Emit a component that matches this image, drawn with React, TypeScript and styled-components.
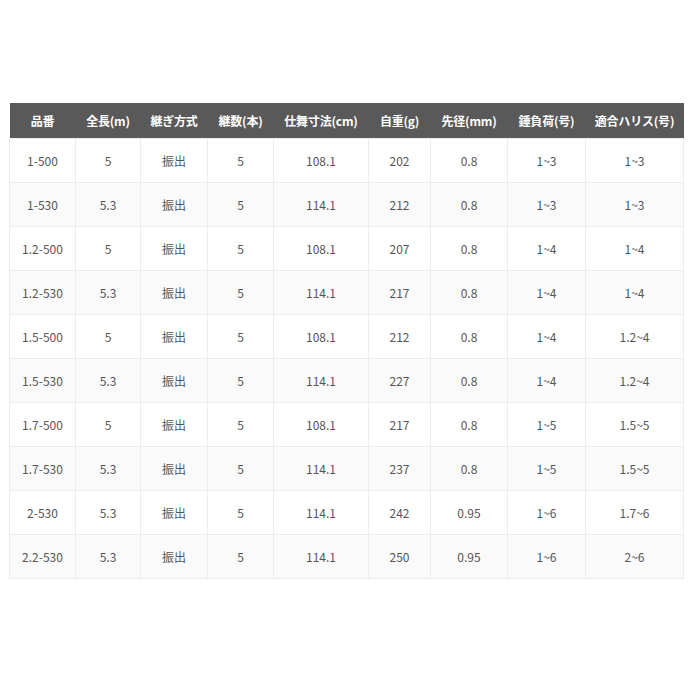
import React from 'react';
import styled, { createGlobalStyle } from 'styled-components';

const GlobalStyle = createGlobalStyle`
  body {
    margin: 0;
    background: #fff;
    font-family: "Noto Sans CJK JP", "Noto Sans", sans-serif;
  }
`;

const Page = styled.div`
  padding: 103px 8px 0 9px;
`;

const SpecTable = styled.table`
  width: 674px;
  table-layout: fixed;
  border-collapse: collapse;
  font-size: 12px;
`;

const HeadCell = styled.th`
  height: 35px;
  padding: 0;
  background: #595959;
  color: #fff;
  font-weight: 700;
  text-align: center;
  letter-spacing: -0.2px;
`;

const Row = styled.tr<{ $alt: boolean }>`
  background: ${(p) => (p.$alt ? '#fafafa' : '#fff')};
`;

const Cell = styled.td`
  height: 43px;
  padding: 0;
  border: 1px solid #ececec;
  color: #555;
  text-align: center;
`;

const columns = [
  { label: '品番', width: 66 },
  { label: '全長(m)', width: 65 },
  { label: '継ぎ方式', width: 67 },
  { label: '継数(本)', width: 66 },
  { label: '仕舞寸法(cm)', width: 95 },
  { label: '自重(g)', width: 62 },
  { label: '先径(mm)', width: 77 },
  { label: '錘負荷(号)', width: 78 },
  { label: '適合ハリス(号)', width: 98 },
];

const rows = [
  ['1-500', '5', '振出', '5', '108.1', '202', '0.8', '1~3', '1~3'],
  ['1-530', '5.3', '振出', '5', '114.1', '212', '0.8', '1~3', '1~3'],
  ['1.2-500', '5', '振出', '5', '108.1', '207', '0.8', '1~4', '1~4'],
  ['1.2-530', '5.3', '振出', '5', '114.1', '217', '0.8', '1~4', '1~4'],
  ['1.5-500', '5', '振出', '5', '108.1', '212', '0.8', '1~4', '1.2~4'],
  ['1.5-530', '5.3', '振出', '5', '114.1', '227', '0.8', '1~4', '1.2~4'],
  ['1.7-500', '5', '振出', '5', '108.1', '217', '0.8', '1~5', '1.5~5'],
  ['1.7-530', '5.3', '振出', '5', '114.1', '237', '0.8', '1~5', '1.5~5'],
  ['2-530', '5.3', '振出', '5', '114.1', '242', '0.95', '1~6', '1.7~6'],
  ['2.2-530', '5.3', '振出', '5', '114.1', '250', '0.95', '1~6', '2~6'],
];

const App: React.FC = () => (
  <>
    <GlobalStyle />
    <Page>
      <SpecTable>
        <colgroup>
          {columns.map((c) => (
            <col key={c.label} style={{ width: c.width }} />
          ))}
        </colgroup>
        <thead>
          <tr>
            {columns.map((c) => (
              <HeadCell key={c.label}>{c.label}</HeadCell>
            ))}
          </tr>
        </thead>
        <tbody>
          {rows.map((r, i) => (
            <Row key={r[0]} $alt={i % 2 === 1}>
              {r.map((v, j) => (
                <Cell key={j}>{v}</Cell>
              ))}
            </Row>
          ))}
        </tbody>
      </SpecTable>
    </Page>
  </>
);

export default App;
